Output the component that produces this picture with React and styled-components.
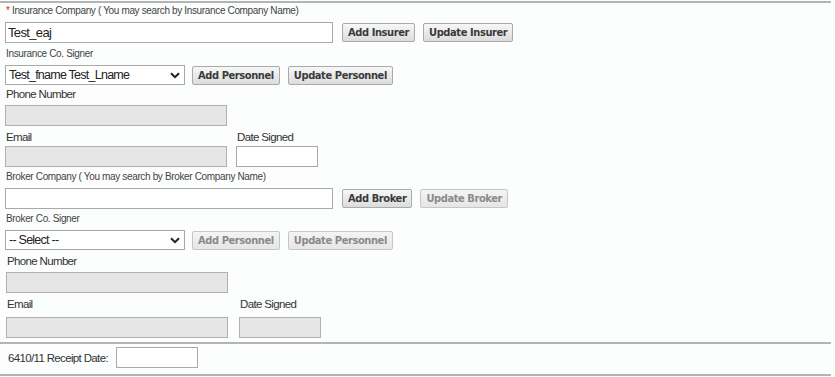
import React from "react";
import styled, { createGlobalStyle } from "styled-components";

const Global = createGlobalStyle`
  html, body { margin: 0; padding: 0; background: #fcfdfd; }
  body { font-family: "Liberation Sans", Arial, sans-serif; color: #333; }
`;

const Page = styled.div`
  width: 831px;
  margin-top: 1px;
  border-top: 2px solid #b4b4b4;
`;

const Rule = styled.div`
  height: 2px;
  background: #b4b4b4;
  margin-top: ${(p) => p.$mt || 0}px;
`;

const Section = styled.div`
  padding-left: ${(p) => p.$pl || 5}px;
  display: flex;
  flex-direction: column;
`;

const SmallLabel = styled.div`
  font-size: 10px;
  line-height: 14px;
  height: 14px;
  letter-spacing: -0.35px;
  color: #444;
  padding-left: 1px;
  margin-top: ${(p) => p.$mt || 0}px;
`;

const Star = styled.span`
  color: #d9242a;
`;

const Label = styled.div`
  font-size: 11.5px;
  line-height: 14px;
  height: 14px;
  letter-spacing: -0.65px;
  color: #333;
  padding-left: 1px;
`;

const Row = styled.div`
  display: flex;
  align-items: ${(p) => p.$align || "center"};
  gap: ${(p) => p.$gap || 8}px;
  margin-top: ${(p) => p.$mt || 0}px;
`;

const Col = styled.div`
  display: flex;
  flex-direction: column;
  width: ${(p) => p.$w}px;
`;

const TextInput = styled.div`
  box-sizing: border-box;
  width: ${(p) => p.$w}px;
  height: 21px;
  margin-top: ${(p) => p.$mt || 0}px;
  border: 1px solid ${(p) => (p.$disabled ? "#b0b0b0" : "#a9a9a9")};
  background: ${(p) => (p.$disabled ? "#e6e6e6" : "#fff")};
  font-size: 13px;
  line-height: 19px;
  padding-left: 2px;
  letter-spacing: -0.65px;
  color: #222;
`;

const Select = styled.div`
  box-sizing: border-box;
  width: 180px;
  height: 20px;
  border: 1px solid #a9a9a9;
  background: #fff;
  display: flex;
  align-items: center;
  justify-content: space-between;
  padding: 0 4px 0 3px;
  font-size: 12.5px;
  letter-spacing: -0.75px;
  color: #222;
`;

const Button = styled.button`
  box-sizing: border-box;
  height: 19px;
  padding: 0 5px;
  border: 1px solid ${(p) => (p.disabled ? "#c6c6c6" : "#aaaaaa")};
  border-radius: 2px;
  background: ${(p) =>
    p.disabled
      ? "linear-gradient(#f4f4f4, #e6e6e6)"
      : "linear-gradient(#f7f7f7, #dcdcdc)"};
  font-family: "DejaVu Sans Condensed", "DejaVu Sans", sans-serif;
  font-weight: bold;
  font-size: 11px;
  letter-spacing: -0.4px;
  color: ${(p) => (p.disabled ? "#8a8a8a" : "#3a3a3a")};
  white-space: nowrap;
  cursor: default;
`;

const Chevron = () => (
  <svg width="10" height="7" viewBox="0 0 10 7">
    <path d="M1 1.2 L5 5.2 L9 1.2" fill="none" stroke="#222" strokeWidth="2" />
  </svg>
);

const ReceiptRow = styled.div`
  display: flex;
  align-items: center;
  gap: 8px;
  padding-left: 8px;
  margin-top: 3px;
  font-size: 11.5px;
  letter-spacing: -0.65px;
  color: #333;
`;

export default function App() {
  return (
    <Page>
      <Global />
      <Section>
        <SmallLabel $mt={1}>
          <Star>*</Star> Insurance Company ( You may search by Insurance Company Name)
        </SmallLabel>
        <Row $mt={4} $gap={9}>
          <TextInput $w={328}>Test_eaj</TextInput>
          <Row $gap={8}>
            <Button>Add Insurer</Button>
            <Button>Update Insurer</Button>
          </Row>
        </Row>
        <SmallLabel $mt={4}>Insurance Co. Signer</SmallLabel>
        <Row $mt={4} $gap={7}>
          <Select>
            <span>Test_fname Test_Lname</span>
            <Chevron />
          </Select>
          <Row $gap={8}>
            <Button>Add Personnel</Button>
            <Button>Update Personnel</Button>
          </Row>
        </Row>
        <Row $mt={2} $align="flex-start" $gap={9}>
          <Col $w={222}>
            <Label>Phone Number</Label>
            <TextInput $w={222} $disabled $mt={4} />
          </Col>
        </Row>
        <Row $mt={4} $align="flex-start" $gap={9}>
          <Col $w={222}>
            <Label>Email</Label>
            <TextInput $w={222} $disabled $mt={2} />
          </Col>
          <Col $w={82}>
            <Label>Date Signed</Label>
            <TextInput $w={82} $mt={2} />
          </Col>
        </Row>
        <SmallLabel $mt={3}>Broker Company ( You may search by Broker Company Name)</SmallLabel>
        <Row $mt={4} $gap={9}>
          <TextInput $w={328} />
          <Row $gap={8}>
            <Button>Add Broker</Button>
            <Button disabled>Update Broker</Button>
          </Row>
        </Row>
        <SmallLabel $mt={3}>Broker Co. Signer</SmallLabel>
        <Row $mt={4} $gap={7}>
          <Select>
            <span>-- Select --</span>
            <Chevron />
          </Select>
          <Row $gap={8}>
            <Button disabled>Add Personnel</Button>
            <Button disabled>Update Personnel</Button>
          </Row>
        </Row>
      </Section>
      <Section $pl={6}>
        <Row $mt={4} $align="flex-start">
          <Col $w={222}>
            <Label>Phone Number</Label>
            <TextInput $w={222} $disabled $mt={4} />
          </Col>
        </Row>
        <Row $mt={4} $align="flex-start" $gap={11}>
          <Col $w={222}>
            <Label>Email</Label>
            <TextInput $w={222} $disabled $mt={6} />
          </Col>
          <Col $w={82}>
            <Label>Date Signed</Label>
            <TextInput $w={82} $disabled $mt={6} />
          </Col>
        </Row>
      </Section>
      <Rule $mt={4} />
      <ReceiptRow>
        <span>6410/11 Receipt Date:</span>
        <TextInput $w={82} />
      </ReceiptRow>
      <Rule $mt={6} />
    </Page>
  );
}
